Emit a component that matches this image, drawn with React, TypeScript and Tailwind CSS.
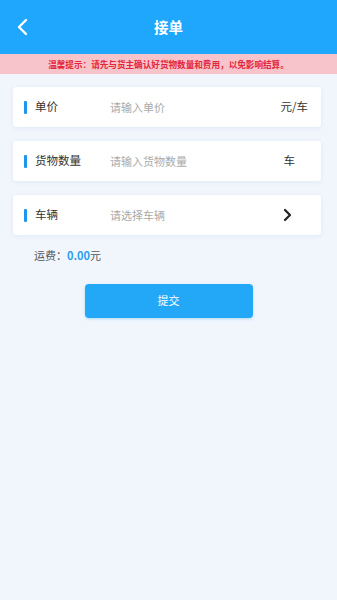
import React from 'react';

const font = { fontFamily: '"Noto Sans CJK SC", "Noto Sans", sans-serif' };

const Row = ({ label, placeholder, right }: { label: string; placeholder: string; right: React.ReactNode }) => (
  <div className="ml-[13px] w-[308px] h-10 bg-white rounded-[3px] shadow-[0_1px_4px_rgba(150,170,200,0.18)] flex items-center pl-[11px] pr-[13px]">
    <div className="w-[3px] h-[13px] bg-[#1e96ee] rounded-[1px]" />
    <div className="w-[83px] pl-[8px] text-[11.5px] text-[#333]">{label}</div>
    <div className="flex-1 text-[11px] text-[#aaa]">{placeholder}</div>
    <div className="text-[11.5px] text-[#333]">{right}</div>
  </div>
);

export default function App() {
  return (
    <div className="w-[337px] h-[600px] bg-[#f1f6fd] flex flex-col" style={font}>
      <div className="h-[54px] bg-[#1ea7fd] flex items-center relative">
        <svg className="absolute left-[16px] top-[18px]" width="14" height="18" viewBox="0 0 14 18">
          <path d="M10 2 L3 9 L10 16" fill="none" stroke="#fff" strokeWidth="2.4" strokeLinecap="round" strokeLinejoin="round" />
        </svg>
        <div className="flex-1 text-center text-white text-[14.5px] font-bold">接单</div>
      </div>
      <div className="h-5 bg-[#f8c4cb] flex items-center justify-center text-[8.6px] font-bold text-[#e3263c]">
        温馨提示：请先与货主确认好货物数量和费用，以免影响结算。
      </div>
      <div className="flex flex-col gap-[14px] pt-[13px]">
        <Row label="单价" placeholder="请输入单价" right="元/车" />
        <Row label="货物数量" placeholder="请输入货物数量" right={<span className="pr-[13px]">车</span>} />
        <Row
          label="车辆"
          placeholder="请选择车辆"
          right={
            <svg className="mr-[16px]" width="9" height="14" viewBox="0 0 9 14">
              <path d="M2 2 L7 7 L2 12" fill="none" stroke="#222" strokeWidth="2.2" strokeLinecap="round" strokeLinejoin="round" />
            </svg>
          }
        />
      </div>
      <div className="pl-[34px] pt-[12px] text-[11px] text-[#555]">
        运费：<span className="text-[#2a9ff0] font-bold">0.00</span>元
      </div>
      <div className="flex justify-center pt-[20px]">
        <button className="w-[168px] h-[34px] rounded-[4px] bg-[#22a8f7] text-white text-[11px] shadow-[0_1px_3px_rgba(30,150,240,0.3)]">
          提交
        </button>
      </div>
    </div>
  );
}
